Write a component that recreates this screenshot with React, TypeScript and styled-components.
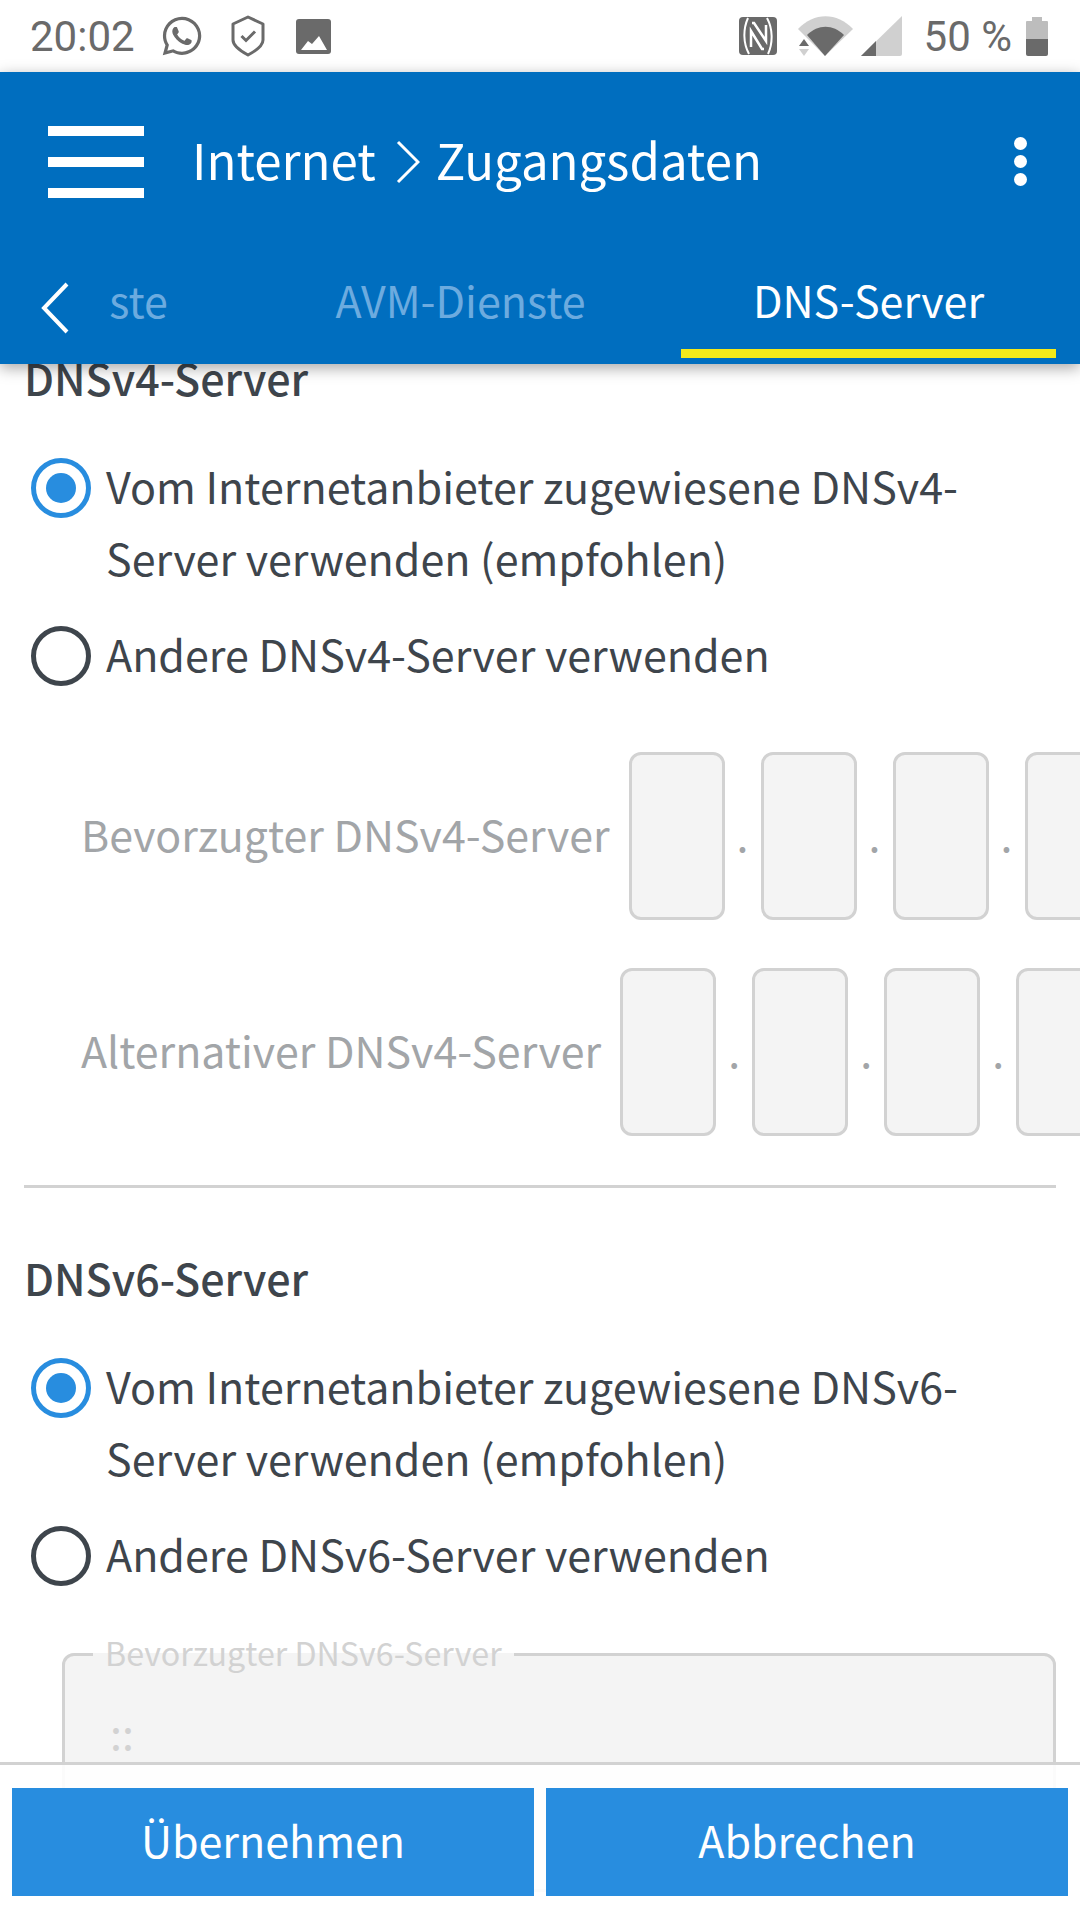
import React from "react";
import styled, { createGlobalStyle } from "styled-components";
import { FaWhatsapp } from "react-icons/fa";

const Global = createGlobalStyle`
  html, body { margin: 0; padding: 0; background: #fff; }
  * { box-sizing: border-box; }
`;

const Page = styled.div`
  position: relative;
  width: 1080px;
  height: 1920px;
  overflow: hidden;
  display: flex;
  flex-direction: column;
  background: #fff;
  font-family: "Noto Sans CJK SC", "Noto Sans", sans-serif;
  color: #3e454c;
`;

const StatusBar = styled.div`
  height: 72px;
  flex: none;
  display: flex;
  align-items: center;
  padding: 0 32px 0 30px;
  color: #6a6a6a;
  font-family: Roboto, sans-serif;
  font-size: 42px;
`;
const StatusTime = styled.span`
  width: 130px;
`;
const StatusSpacer = styled.div`
  flex: 1;
`;
const StatusIcon = styled.svg<{ $mr: number }>`
  display: block;
  flex: none;
  margin-right: ${(p) => p.$mr}px;
`;
const WhatsApp = styled(FaWhatsapp)`
  display: block;
  flex: none;
  width: 44px;
  height: 44px;
  margin-right: 27px;
`;
const Percent = styled.span`
  margin: 0 14px 0 22px;
`;

const Header = styled.header`
  position: relative;
  z-index: 2;
  height: 292px;
  flex: none;
  background: #006ebf;
  box-shadow: 0 4px 14px rgba(0, 0, 0, 0.35);
  color: #fff;
  display: flex;
  flex-direction: column;
`;
const TopBar = styled.div`
  height: 180px;
  flex: none;
  display: flex;
  align-items: center;
  padding: 0 52px 0 48px;
`;
const Hamburger = styled.div`
  width: 96px;
  height: 72px;
  flex: none;
  display: flex;
  flex-direction: column;
  justify-content: space-between;
  margin-right: 48px;
`;
const HamburgerBar = styled.span`
  display: block;
  height: 10px;
  background: #fff;
`;
const Title = styled.div`
  flex: 1;
  display: flex;
  align-items: center;
  padding-bottom: 6px;
  font-size: 49.2px;
  line-height: 72px;
  white-space: nowrap;
`;
const TitleChevron = styled.svg`
  display: block;
  margin: 6px 16px 0 20px;
`;
const Kebab = styled.div`
  display: flex;
  flex-direction: column;
  gap: 5px;
  margin: 0 1px 2px 0;
`;
const KebabDot = styled.span`
  width: 13px;
  height: 13px;
  border-radius: 50%;
  background: #fff;
`;
const TabRow = styled.nav`
  height: 112px;
  flex: none;
  display: flex;
  padding: 0 24px 6px 41px;
`;
const TabBack = styled.svg`
  display: block;
  flex: none;
  margin: 30px 41px 0 0;
`;
const Tab = styled.div<{ $active?: boolean; $width: number; $inset?: number }>`
  width: ${(p) => p.$width}px;
  flex: none;
  display: flex;
  align-items: center;
  justify-content: center;
  padding-left: ${(p) => p.$inset ?? 0}px;
  padding-bottom: ${(p) => (p.$active ? 4 : 13)}px;
  border-bottom: ${(p) => (p.$active ? "9px solid #f4ea1a" : "none")};
  color: ${(p) => (p.$active ? "#fff" : "#6cabdf")};
  font-size: 43px;
  white-space: nowrap;
`;

const Main = styled.main`
  flex: 1;
  min-height: 0;
  overflow: hidden;
`;
const Scroller = styled.div`
  margin-top: -23px;
  padding: 0 24px;
`;
const SectionTitle = styled.h2`
  margin: 0;
  font-size: 43px;
  line-height: 72px;
  font-weight: 500;
`;
const RadioGroup = styled.div`
  margin-top: 39px;
  display: flex;
  flex-direction: column;
  gap: 24px;
`;
const RadioRow = styled.div`
  display: flex;
  align-items: flex-start;
  gap: 15px;
  padding-left: 7px;
  font-size: 43px;
  line-height: 72px;
`;
const RadioText = styled.span`
  margin: -3px 0 3px;
`;
const Radio = styled.span<{ $on?: boolean }>`
  width: 60px;
  height: 60px;
  flex: none;
  margin-top: 6px;
  border-radius: 50%;
  border: 5px solid ${(p) => (p.$on ? "#288ddf" : "#3e454c")};
  display: flex;
  align-items: center;
  justify-content: center;
  &::after {
    content: "";
    display: ${(p) => (p.$on ? "block" : "none")};
    width: 30px;
    height: 30px;
    border-radius: 50%;
    background: #288ddf;
  }
`;
const IpRow = styled.div<{ $top: number }>`
  margin-top: ${(p) => p.$top}px;
  padding-left: 58px;
  display: flex;
  align-items: center;
  white-space: nowrap;
  font-size: 42.9px;
  color: #a2a5a8;
`;
const IpLabel = styled.span`
  margin: 0 19px 6px -1px;
  flex: none;
`;
const IpBox = styled.span`
  width: 96px;
  height: 168px;
  flex: none;
  background: #f4f4f4;
  border: 3px solid #d2d2d2;
  border-radius: 12px;
`;
const IpDot = styled.span`
  width: 36px;
  flex: none;
  text-align: center;
  line-height: 162px;
  margin-bottom: 6px;
`;
const Divider = styled.hr`
  margin: 49px 0 53px;
  border: 0;
  height: 3px;
  background: #d2d2d2;
`;
const Fieldset = styled.fieldset`
  margin: 40px 0 0 38px;
  padding: 0 45px;
  height: 260px;
  background: #f4f4f4;
  border: 3px solid #d2d2d2;
  border-radius: 12px;
`;
const Legend = styled.legend`
  margin-left: -17px;
  padding: 0 12px 5px;
  font-size: 32.2px;
  line-height: 40px;
  color: #d2d2d2;
`;
const FieldValue = styled.div`
  margin-top: 24px;
  font-size: 43px;
  line-height: 60px;
  color: #d2d2d2;
`;

const Footer = styled.footer`
  position: absolute;
  left: 0;
  right: 0;
  bottom: 0;
  z-index: 3;
  height: 158px;
  background: rgba(255, 255, 255, 0.9);
  border-top: 3px solid #d2d2d2;
  display: flex;
  gap: 12px;
  padding: 23px 12px 24px;
`;
const Button = styled.button`
  flex: 1;
  border: 0;
  border-radius: 0;
  padding: 0 0 6px;
  background: #288ddf;
  color: #fff;
  font-family: inherit;
  font-size: 43px;
`;

const DnsSection = ({ v }: { v: string }) => (
  <>
    <SectionTitle>{`DNSv${v}-Server`}</SectionTitle>
    <RadioGroup>
      <RadioRow>
        <Radio $on />
        <RadioText>{`Vom Internetanbieter zugewiesene DNSv${v}-Server verwenden (empfohlen)`}</RadioText>
      </RadioRow>
      <RadioRow>
        <Radio />
        <RadioText>{`Andere DNSv${v}-Server verwenden`}</RadioText>
      </RadioRow>
    </RadioGroup>
  </>
);

const IpField = ({ label, top }: { label: string; top: number }) => (
  <IpRow $top={top}>
    <IpLabel>{label}</IpLabel>
    <IpBox />
    <IpDot>.</IpDot>
    <IpBox />
    <IpDot>.</IpDot>
    <IpBox />
    <IpDot>.</IpDot>
    <IpBox />
  </IpRow>
);

export default function App() {
  return (
    <Page>
      <Global />
      <StatusBar>
        <StatusTime>20:02</StatusTime>
        <WhatsApp />
        <StatusIcon $mr={31} width="34" height="42" viewBox="0 0 34 42">
          <path d="M17 2 L32 9 V25 Q32 32 17 40 Q2 32 2 25 V9 Z" fill="none" stroke="#6a6a6a" strokeWidth="3" strokeLinejoin="round" />
          <path d="M10.5 21 L15 25.5 L24 16.5" fill="none" stroke="#6a6a6a" strokeWidth="3" />
        </StatusIcon>
        <StatusIcon $mr={0} width="35" height="35" viewBox="0 0 35 35">
          <rect width="35" height="35" rx="3" fill="#6a6a6a" />
          <path d="M5 31 L12 22 L16 25 L23 17 L31 31 Z" fill="#fff" />
        </StatusIcon>
        <StatusSpacer />
        <StatusIcon $mr={21} width="38" height="38" viewBox="0 0 38 38">
          <rect width="38" height="38" rx="4" fill="#6a6a6a" />
          <path d="M9 1 C4 12 4 26 10 37 M29 37 C34 26 34 12 28 1" fill="none" stroke="#fff" strokeWidth="2" />
          <path d="M13 6 H15 L27 24 V8 M25 32 H23 L12 14 V30" fill="none" stroke="#fff" strokeWidth="2.5" />
        </StatusIcon>
        <StatusIcon $mr={8} width="55" height="40" viewBox="0 0 55 40">
          <path d="M0 13 C16 -4 39 -4 55 13 L27 40 Z" fill="#d0d0d0" />
          <path d="M9 19 C20 8 35 8 46 19 L27 40 Z" fill="#6a6a6a" />
          <path d="M6 23 L11 30 H1 Z" fill="#6a6a6a" />
          <path d="M1 33 H11 L6 40 Z" fill="#d0d0d0" />
        </StatusIcon>
        <StatusIcon $mr={0} width="41" height="40" viewBox="0 0 41 40">
          <path d="M0 40 L41 0 V38 Q41 40 39 40 Z" fill="#d0d0d0" />
          <path d="M0 40 L15 25 V40 Z" fill="#6a6a6a" />
        </StatusIcon>
        <Percent>50 %</Percent>
        <StatusIcon $mr={0} width="22" height="39" viewBox="0 0 22 39">
          <path d="M6 0 H16 V4 H21 Q22 4 22 5 V22 H0 V5 Q0 4 1 4 H6 Z" fill="#bdbdbd" />
          <path d="M0 22 H22 V37 Q22 39 20 39 H2 Q0 39 0 37 Z" fill="#6a6a6a" />
        </StatusIcon>
      </StatusBar>
      <Header>
        <TopBar>
          <Hamburger>
            <HamburgerBar />
            <HamburgerBar />
            <HamburgerBar />
          </Hamburger>
          <Title>
            Internet
            <TitleChevron width="24" height="44" viewBox="0 0 24 44">
              <path d="M2 2 L22 22 L2 42" fill="none" stroke="#fff" strokeWidth="3" />
            </TitleChevron>
            Zugangsdaten
          </Title>
          <Kebab>
            <KebabDot />
            <KebabDot />
            <KebabDot />
          </Kebab>
        </TopBar>
        <TabRow>
          <TabBack width="28" height="52" viewBox="0 0 28 52">
            <path d="M26 2 L3 26 L26 50" fill="none" stroke="#fff" strokeWidth="4" />
          </TabBack>
          <Tab $width={57}>ste</Tab>
          <Tab $width={514} $inset={73}>AVM-Dienste</Tab>
          <Tab $active $width={375}>DNS-Server</Tab>
        </TabRow>
      </Header>
      <Main>
        <Scroller>
          <DnsSection v="4" />
          <IpField label="Bevorzugter DNSv4-Server" top={60} />
          <IpField label="Alternativer DNSv4-Server" top={48} />
          <Divider />
          <DnsSection v="6" />
          <Fieldset>
            <Legend>Bevorzugter DNSv6-Server</Legend>
            <FieldValue>::</FieldValue>
          </Fieldset>
        </Scroller>
      </Main>
      <Footer>
        <Button>Übernehmen</Button>
        <Button>Abbrechen</Button>
      </Footer>
    </Page>
  );
}
